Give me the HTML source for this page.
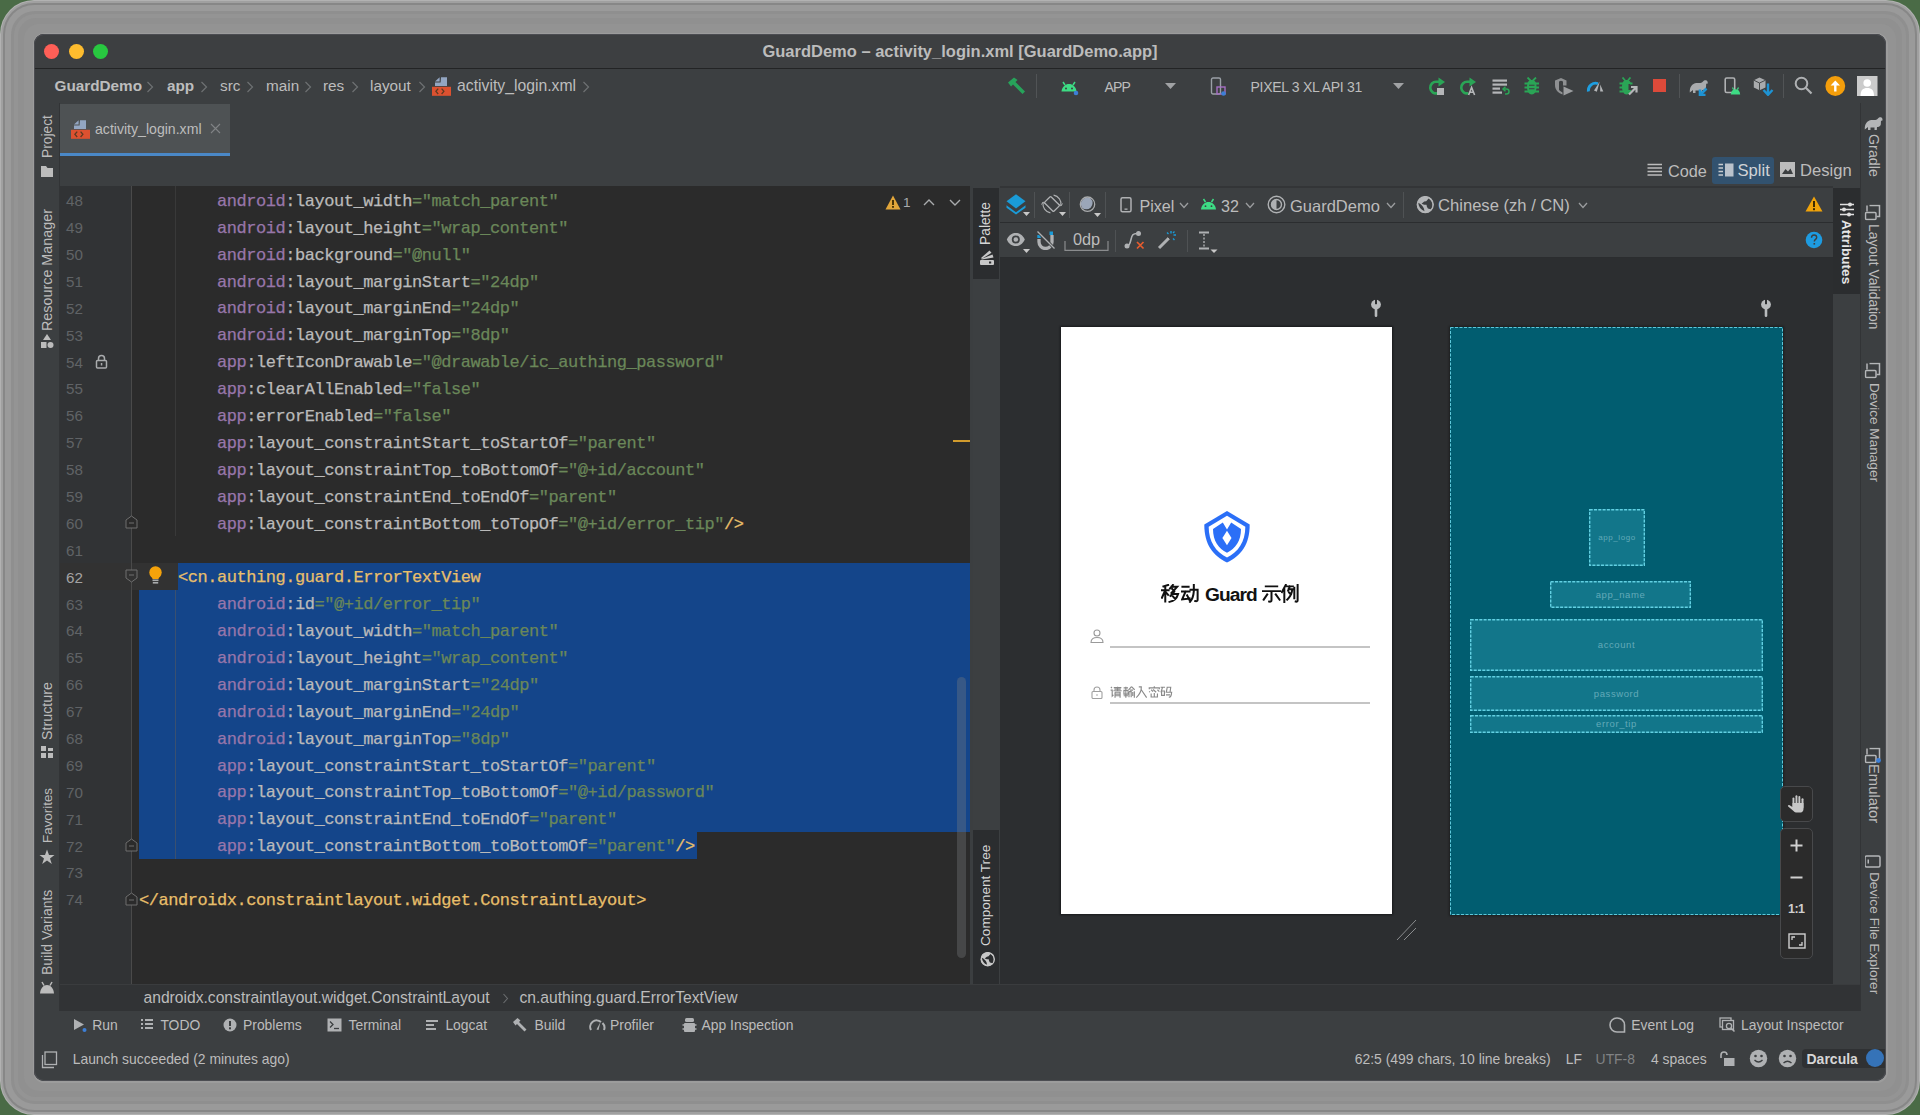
<!DOCTYPE html><html><head><meta charset="utf-8"><style>html,body{margin:0;padding:0}body{width:1920px;height:1115px;position:relative;overflow:hidden;background:#4a6b46}#root div,#root svg{box-sizing:border-box}</style></head><body><div id="root">
<div style="position:absolute;left:0px;top:0px;right:0px;bottom:0px;border-radius:34px;background:#b2b2b2"></div>
<div style="position:absolute;left:1px;top:1px;right:1px;bottom:1px;border-radius:33px;background:#a0a0a0"></div>
<div style="position:absolute;left:3px;top:3px;right:3px;bottom:3px;border-radius:31px;background:#878787"></div>
<div style="position:absolute;left:5px;top:5px;right:5px;bottom:5px;border-radius:29px;background:#9a9a9a"></div>
<div style="position:absolute;left:11px;top:11px;right:11px;bottom:11px;border-radius:24px;background:#8f8f8f"></div>
<div style="position:absolute;left:14px;top:14px;right:14px;bottom:14px;border-radius:21px;background:#949494"></div>
<div style="position:absolute;left:18px;top:18px;right:18px;bottom:18px;border-radius:18px;background:#909090"></div>
<div style="position:absolute;left:24px;top:24px;right:24px;bottom:24px;border-radius:15px;background:#939393"></div>
<div style="position:absolute;left:32.5px;top:32.5px;right:32.5px;bottom:32.5px;border-radius:11.5px;background:#9c9c9c"></div>
<div id="win" style="position:absolute;left:0;top:0;width:1920px;height:1115px;clip-path:inset(34px 34px 34px 34px round 10px);background:#3c3f41">
<div style="position:absolute;left:34px;top:34px;width:1852px;height:34px;background:#3d3f41;"></div>
<div style="position:absolute;left:34px;top:68px;width:1852px;height:1px;background:#232425;"></div>
<div style="position:absolute;left:44.0px;top:44px;width:15px;height:15px;border-radius:50%;background:#ff5f57"></div>
<div style="position:absolute;left:68.5px;top:44px;width:15px;height:15px;border-radius:50%;background:#febc2e"></div>
<div style="position:absolute;left:93.0px;top:44px;width:15px;height:15px;border-radius:50%;background:#28c840"></div>
<div style="position:absolute;left:560px;top:41px;width:800px;text-align:center;font:bold 16.5px/20px 'Liberation Sans', sans-serif;color:#bcbcbc;white-space:pre">GuardDemo – activity_login.xml [GuardDemo.app]</div>
<div style="position:absolute;left:34px;top:69px;width:1852px;height:34px;background:#3c3f41;"></div>
<div style="position:absolute;left:54.5px;top:76px;font:bold 15.3px/18px 'Liberation Sans', sans-serif;color:#bdbdbd;white-space:pre;line-height:20px">GuardDemo</div>
<div style="position:absolute;left:167px;top:76px;font:bold 15.3px/18px 'Liberation Sans', sans-serif;color:#bdbdbd;white-space:pre;line-height:20px">app</div>
<div style="position:absolute;left:220px;top:76px;font:normal 15.3px/18px 'Liberation Sans', sans-serif;color:#bdbdbd;white-space:pre;line-height:20px">src</div>
<div style="position:absolute;left:266px;top:76px;font:normal 15.3px/18px 'Liberation Sans', sans-serif;color:#bdbdbd;white-space:pre;line-height:20px">main</div>
<div style="position:absolute;left:323px;top:76px;font:normal 15.3px/18px 'Liberation Sans', sans-serif;color:#bdbdbd;white-space:pre;line-height:20px">res</div>
<div style="position:absolute;left:370px;top:76px;font:normal 15.3px/18px 'Liberation Sans', sans-serif;color:#bdbdbd;white-space:pre;line-height:20px">layout</div>
<svg style="position:absolute;left:146.3px;top:80.5px;" width="8" height="12" viewBox="0 0 8 12"><path d="M1.5 1 L6.5 6 L1.5 11" fill="none" stroke="#6e7173" stroke-width="1.2"/></svg>
<svg style="position:absolute;left:199.5px;top:80.5px;" width="8" height="12" viewBox="0 0 8 12"><path d="M1.5 1 L6.5 6 L1.5 11" fill="none" stroke="#6e7173" stroke-width="1.2"/></svg>
<svg style="position:absolute;left:246.3px;top:80.5px;" width="8" height="12" viewBox="0 0 8 12"><path d="M1.5 1 L6.5 6 L1.5 11" fill="none" stroke="#6e7173" stroke-width="1.2"/></svg>
<svg style="position:absolute;left:303.8px;top:80.5px;" width="8" height="12" viewBox="0 0 8 12"><path d="M1.5 1 L6.5 6 L1.5 11" fill="none" stroke="#6e7173" stroke-width="1.2"/></svg>
<svg style="position:absolute;left:350.7px;top:80.5px;" width="8" height="12" viewBox="0 0 8 12"><path d="M1.5 1 L6.5 6 L1.5 11" fill="none" stroke="#6e7173" stroke-width="1.2"/></svg>
<svg style="position:absolute;left:417.7px;top:80.5px;" width="8" height="12" viewBox="0 0 8 12"><path d="M1.5 1 L6.5 6 L1.5 11" fill="none" stroke="#6e7173" stroke-width="1.2"/></svg>
<svg style="position:absolute;left:581.7px;top:80.5px;" width="8" height="12" viewBox="0 0 8 12"><path d="M1.5 1 L6.5 6 L1.5 11" fill="none" stroke="#6e7173" stroke-width="1.2"/></svg>
<svg style="position:absolute;left:432px;top:77px;" width="20" height="20" viewBox="0 0 20 20"><path d="M9 0.2 H15 V9 H3 V5.6 H8.6 Z" fill="#93a6c2"/><path d="M3 4.6 L7.6 0.3 V4.6 Z" fill="#93a6c2"/><rect x="0" y="9.8" width="19" height="9" fill="#dc5130"/><path d="M6.2 11.6 L3.9 14.3 L6.2 17 M9.6 11.6 L11.9 14.3 L9.6 17" fill="none" stroke="#5e3a22" stroke-width="1.3"/></svg>
<div style="position:absolute;left:457px;top:76px;font:normal 15.75px/19px 'Liberation Sans', sans-serif;color:#bdbdbd;white-space:pre;line-height:20px">activity_login.xml</div>
<svg style="position:absolute;left:1006px;top:76px;" width="20" height="20" viewBox="0 0 20 20"><path d="M2 6.5 L8 1.5 L11.5 4 L9.5 6 L19 15.5 L16.5 18 L7 8.5 L5 10.5 Z" fill="#27a35a"/></svg>
<div style="position:absolute;left:1036px;top:74px;width:1px;height:24px;background:#515456;"></div>
<svg style="position:absolute;left:1060px;top:78px;" width="20" height="18" viewBox="0 0 20 18"><path d="M3 4 L5 7 M15 4 L13 7" stroke="#3ddc84" stroke-width="1.5"/><path d="M1.5 13.5 C2 8.5 5.5 6 9 6 C12.5 6 16 8.5 16.5 13.5 Z" fill="#3ddc84"/><circle cx="6" cy="10.5" r="1" fill="#3c3f41"/><circle cx="12" cy="10.5" r="1" fill="#3c3f41"/><circle cx="16" cy="15" r="2.3" fill="#3d7fd6"/></svg>
<div style="position:absolute;left:1104.5px;top:77px;font:normal 14px/17px 'Liberation Sans', sans-serif;color:#bdbdbd;white-space:pre;line-height:20px;letter-spacing:-0.9px">APP</div>
<svg style="position:absolute;left:1165px;top:83px;" width="11" height="6" viewBox="0 0 11 6"><path d="M0 0 H11 L5.5 6 Z" fill="#a0a2a4"/></svg>
<svg style="position:absolute;left:1210px;top:77px;" width="18" height="20" viewBox="0 0 18 20"><rect x="1.5" y="1" width="9" height="16" rx="1.5" fill="none" stroke="#9aa0a6" stroke-width="1.4"/><rect x="7" y="10" width="8" height="7" fill="none" stroke="#a66fc4" stroke-width="1.4"/><circle cx="13.5" cy="16.5" r="2.3" fill="#3d7fd6"/></svg>
<div style="position:absolute;left:1250.5px;top:77px;font:normal 14px/17px 'Liberation Sans', sans-serif;color:#bdbdbd;white-space:pre;line-height:20px;letter-spacing:-0.29px">PIXEL 3 XL API 31</div>
<svg style="position:absolute;left:1393px;top:83px;" width="11" height="6" viewBox="0 0 11 6"><path d="M0 0 H11 L5.5 6 Z" fill="#a0a2a4"/></svg>
<svg style="position:absolute;left:1428px;top:77px;" width="18" height="19" viewBox="0 0 18 19"><path d="M9.5 16.2 A5.8 5.8 0 1 1 8.5 4.8 H11" fill="none" stroke="#2aa556" stroke-width="2.6"/><path d="M10.5 0.4 L17 5 L10.5 9.6 Z" fill="#2aa556"/><rect x="9" y="11" width="7" height="7" fill="#b4b6b8"/></svg>
<svg style="position:absolute;left:1459px;top:77px;" width="18" height="19" viewBox="0 0 18 19"><path d="M9.5 16.2 A5.8 5.8 0 1 1 8.5 4.8 H11" fill="none" stroke="#2aa556" stroke-width="2.6"/><path d="M10.5 0.4 L17 5 L10.5 9.6 Z" fill="#2aa556"/><path d="M9.6 18 L12.6 10.5 L15.6 18 M10.8 15.2 H14.4" fill="none" stroke="#b4b6b8" stroke-width="1.6"/></svg>
<svg style="position:absolute;left:1492px;top:78px;" width="20" height="18" viewBox="0 0 20 18"><rect x="0.5" y="1.5" width="14.5" height="2.2" fill="#b4b6b8"/><rect x="0.5" y="5.5" width="14.5" height="2.2" fill="#b4b6b8"/><rect x="0.5" y="9.5" width="7.5" height="2.2" fill="#b4b6b8"/><rect x="0.5" y="13.5" width="9.5" height="2.2" fill="#b4b6b8"/><path d="M11.5 11 H14.5 A2.5 2.5 0 0 1 14.5 16 H13" fill="none" stroke="#2aa556" stroke-width="1.5"/><path d="M13.5 8.8 L11 11 L13.5 13.2" fill="none" stroke="#2aa556" stroke-width="1.5"/></svg>
<svg style="position:absolute;left:1524px;top:77px;" width="16" height="18" viewBox="0 0 16 18"><path d="M3.5 0.5 L7 4 M12 0.5 L8.5 4" stroke="#2aa556" stroke-width="1.8"/><path d="M7.75 3 C11 3 12.5 5.5 12.5 10 C12.5 14.5 10.5 17.5 7.75 17.5 C5 17.5 3 14.5 3 10 C3 5.5 4.5 3 7.75 3 Z" fill="#2aa556"/><path d="M0.5 6.5 H15 M0.5 10.5 H15 M0.5 14.5 H15" stroke="#2aa556" stroke-width="2"/><path d="M5 8.2 H10.5 M5 11.8 H10.5" stroke="#3c3f41" stroke-width="1.1"/></svg>
<svg style="position:absolute;left:1554px;top:77px;" width="20" height="19" viewBox="0 0 20 19"><path d="M1 3.5 L7 1 L12.5 3.5 V8.5 H9 V4.5 L7 3.8 L5 4.5 V13 C6 14 7 14.8 8.5 15.5 V17.5 C4 16 1 12.5 1 8 Z" fill="#8e9092"/><path d="M9.5 9.5 L19.5 14 L9.5 18.5 Z" fill="#9c9ea0"/></svg>
<svg style="position:absolute;left:1586px;top:78px;" width="19" height="15" viewBox="0 0 19 15"><path d="M2.3 13.5 A7.5 7.5 0 0 1 12 5.6" fill="none" stroke="#1e9ee0" stroke-width="2.8"/><path d="M14.2 6.5 L17.3 13.5 H14.2 Z" fill="#b4b6b8"/><path d="M13.8 3.5 L8 12.5 L10.8 13.8 Z" fill="#b4b6b8"/></svg>
<svg style="position:absolute;left:1619px;top:77px;" width="19" height="19" viewBox="0 0 19 19"><path d="M3.5 0.5 L6.5 4 M11.5 0.5 L8.5 4" stroke="#2aa556" stroke-width="1.8"/><path d="M7.5 3 C10.5 3 12 5 12 7 H9.5 V13 H12 V14 C11 16.5 9.5 17.5 7.5 17.5 C5 17.5 3 14.5 3 10 C3 5.5 4.5 3 7.5 3 Z" fill="#2aa556"/><path d="M0.5 6.5 H4 M0.5 10.5 H4 M0.5 14.5 H4 M11 6.5 H13.5" stroke="#2aa556" stroke-width="2"/><path d="M10 17.5 L17 10.5 M12 10 H17.5 V15.5" fill="none" stroke="#b4b6b8" stroke-width="2.2"/></svg>
<div style="position:absolute;left:1653px;top:79px;width:12.5px;height:13px;background:#dc4a3a"></div>
<div style="position:absolute;left:1679px;top:74px;width:1px;height:24px;background:#515456;"></div>
<svg style="position:absolute;left:1689px;top:78px;" width="21" height="18" viewBox="0 0 21 18"><path d="M0.8 14.5 C0.5 9 3 5.5 7.5 5 C10.5 4.7 12.5 5.5 14 3.5 C15 2 17.5 1.5 18.5 3.5 C19.3 5.3 18 6.8 17.2 5.3 L17 9.5 C16.5 11.5 14.5 12 13 12 L12.8 15 H10.5 V12.5 H6.5 V15 H4 V12 Z" fill="#a9abad"/><path d="M11 17 L17.5 10.5 M11 11.5 V17 H16.5" fill="none" stroke="#1e93d3" stroke-width="2.6"/></svg>
<svg style="position:absolute;left:1724px;top:77px;" width="17" height="19" viewBox="0 0 17 19"><rect x="1.2" y="1" width="9.5" height="14.5" rx="1.5" fill="none" stroke="#afb1b3" stroke-width="1.6"/><path d="M6.8 17.5 C7 14 9 12.3 11.5 12.3 C14 12.3 16 14 16.2 17.5 Z" fill="#3ddc84"/><path d="M8.5 10.5 L9.6 12.6 M14.5 10.5 L13.4 12.6" stroke="#3ddc84" stroke-width="1.2"/></svg>
<svg style="position:absolute;left:1753px;top:77px;" width="21" height="19" viewBox="0 0 21 19"><path d="M6.5 0.5 L12.5 3.2 V10.5 L6.5 13.2 L0.8 10.5 V3.2 Z" fill="#a9abad"/><path d="M0.8 3.2 L6.5 6 L12.5 3.2 M6.5 6 V13.2" fill="none" stroke="#3c3f41" stroke-width="0.9"/><path d="M15 6.5 V17.5 M10.5 13 L15 17.8 L19.5 13" fill="none" stroke="#1e93d3" stroke-width="2.4"/></svg>
<div style="position:absolute;left:1783px;top:74px;width:1px;height:24px;background:#515456;"></div>
<svg style="position:absolute;left:1794px;top:76px;" width="19" height="19" viewBox="0 0 19 19"><circle cx="7.5" cy="7.5" r="5.8" fill="none" stroke="#afb1b3" stroke-width="2"/><path d="M11.8 11.8 L17.5 17.5" stroke="#afb1b3" stroke-width="2.2"/></svg>
<svg style="position:absolute;left:1825px;top:76px;" width="21" height="21" viewBox="0 0 21 21"><circle cx="10.3" cy="10" r="9.9" fill="#f49e0b"/><path d="M10.3 4.5 L15 9.5 H11.5 V15.5 H9.1 V9.5 H5.6 Z" fill="#fff"/></svg>
<svg style="position:absolute;left:1857px;top:76px;" width="21" height="20" viewBox="0 0 21 20"><rect x="0" y="0" width="20.5" height="20" fill="#cbcbcb"/><circle cx="10.2" cy="7" r="3.8" fill="#fff"/><path d="M3.5 20 C3.5 14 6 12 10.2 12 C14.5 12 17 14 17 20 Z" fill="#fff"/></svg>
<div style="position:absolute;left:34px;top:103px;width:25px;height:908px;background:#3c3f41;"></div>
<div style="position:absolute;left:59px;top:103px;width:1px;height:908px;background:#323436;"></div>
<div style="position:absolute;left:34.5px;top:157.5px;width:0;height:0;"><div style="position:absolute;left:0;top:0;transform-origin:0 0;transform:rotate(-90deg);font:normal 13.8px/25px 'Liberation Sans', sans-serif;color:#bcbcbc;white-space:pre;height:25px">Project</div></div>
<div style="position:absolute;left:34.5px;top:331px;width:0;height:0;"><div style="position:absolute;left:0;top:0;transform-origin:0 0;transform:rotate(-90deg);font:normal 14.35px/25px 'Liberation Sans', sans-serif;color:#bcbcbc;white-space:pre;height:25px">Resource Manager</div></div>
<div style="position:absolute;left:34.5px;top:740px;width:0;height:0;"><div style="position:absolute;left:0;top:0;transform-origin:0 0;transform:rotate(-90deg);font:normal 14.25px/25px 'Liberation Sans', sans-serif;color:#bcbcbc;white-space:pre;height:25px">Structure</div></div>
<div style="position:absolute;left:34.5px;top:842.5px;width:0;height:0;"><div style="position:absolute;left:0;top:0;transform-origin:0 0;transform:rotate(-90deg);font:normal 13.4px/25px 'Liberation Sans', sans-serif;color:#bcbcbc;white-space:pre;height:25px">Favorites</div></div>
<div style="position:absolute;left:34.5px;top:975px;width:0;height:0;"><div style="position:absolute;left:0;top:0;transform-origin:0 0;transform:rotate(-90deg);font:normal 14.0px/25px 'Liberation Sans', sans-serif;color:#bcbcbc;white-space:pre;height:25px">Build Variants</div></div>
<svg style="position:absolute;left:40px;top:164px;" width="14" height="14" viewBox="0 0 14 14"><path d="M1 2 H6 L7.5 4 H13 V13 H1 Z" fill="#bcbcbc"/></svg>
<svg style="position:absolute;left:40px;top:333px;" width="14" height="18" viewBox="0 0 14 18"><path d="M7 1 L11 7 H3 Z" fill="#bcbcbc"/><rect x="1" y="9" width="5.5" height="6" fill="#bcbcbc"/><circle cx="10.5" cy="12" r="3" fill="#bcbcbc"/></svg>
<svg style="position:absolute;left:40px;top:745px;" width="14" height="14" viewBox="0 0 14 14"><rect x="1" y="1" width="5" height="5" fill="#bcbcbc"/><rect x="1" y="8" width="5" height="5" fill="#bcbcbc"/><rect x="8" y="8" width="5" height="5" fill="#bcbcbc"/><rect x="8" y="3" width="5" height="3" fill="#bcbcbc"/></svg>
<svg style="position:absolute;left:39px;top:849px;" width="16" height="16" viewBox="0 0 16 16"><path d="M8 0.5 L10 6 H15.5 L11 9.5 L12.8 15 L8 11.6 L3.2 15 L5 9.5 L0.5 6 H6 Z" fill="#bcbcbc"/></svg>
<svg style="position:absolute;left:39px;top:981px;" width="16" height="13" viewBox="0 0 16 13"><path d="M3 1 L5 4.5 M13 1 L11 4.5" stroke="#bcbcbc" stroke-width="1.5"/><path d="M1 12.5 C1.5 7 4.5 4 8 4 C11.5 4 14.5 7 15 12.5 Z" fill="#bcbcbc"/></svg>
<div style="position:absolute;left:60px;top:103px;width:1800px;height:83px;background:#3c3f41;"></div>
<div style="position:absolute;left:60px;top:104px;width:170px;height:49px;background:#4e5254;"></div>
<div style="position:absolute;left:60px;top:153px;width:170px;height:3px;background:#4a88c7;"></div>
<svg style="position:absolute;left:71px;top:120px;" width="20" height="20" viewBox="0 0 20 20"><path d="M9 0.2 H15 V9 H3 V5.6 H8.6 Z" fill="#93a6c2"/><path d="M3 4.6 L7.6 0.3 V4.6 Z" fill="#93a6c2"/><rect x="0" y="9.8" width="19" height="9" fill="#dc5130"/><path d="M6.2 11.6 L3.9 14.3 L6.2 17 M9.6 11.6 L11.9 14.3 L9.6 17" fill="none" stroke="#5e3a22" stroke-width="1.3"/></svg>
<div style="position:absolute;left:95px;top:119px;font:normal 14.1px/17px 'Liberation Sans', sans-serif;color:#bdbdbd;white-space:pre;line-height:20px">activity_login.xml</div>
<svg style="position:absolute;left:210px;top:123px;" width="11" height="11" viewBox="0 0 11 11"><path d="M1 1 L10 10 M10 1 L1 10" stroke="#808385" stroke-width="1.1"/></svg>
<svg style="position:absolute;left:1647px;top:163px;" width="16" height="14" viewBox="0 0 16 14"><path d="M0.5 1.5 H15 M0.5 5 H15 M0.5 8.5 H15 M0.5 12 H15" stroke="#bcbcbc" stroke-width="1.6"/></svg>
<div style="position:absolute;left:1668px;top:161px;font:normal 16.3px/20px 'Liberation Sans', sans-serif;color:#bcbcbc;white-space:pre;line-height:20px">Code</div>
<div style="position:absolute;left:1712px;top:157px;width:62px;height:27px;border-radius:3px;background:#32526f"></div>
<svg style="position:absolute;left:1718px;top:163px;" width="16" height="14" viewBox="0 0 16 14"><path d="M0.5 1.5 H5 M0.5 5 H5 M0.5 8.5 H5 M0.5 12 H5" stroke="#c8ccd0" stroke-width="1.4"/><rect x="7" y="0.5" width="8.5" height="13" fill="#b9c2cc"/></svg>
<div style="position:absolute;left:1737.5px;top:161px;font:normal 16.6px/20px 'Liberation Sans', sans-serif;color:#d0d3d6;white-space:pre;line-height:20px">Split</div>
<svg style="position:absolute;left:1780px;top:162px;" width="15" height="15" viewBox="0 0 15 15"><rect x="0" y="0" width="15" height="15" fill="#bcbcbc"/><path d="M2 12 L5.5 7 L8 9.5 L10.5 6.5 L13 12 Z" fill="#3c3f41"/></svg>
<div style="position:absolute;left:1800px;top:161px;font:normal 16.6px/20px 'Liberation Sans', sans-serif;color:#bcbcbc;white-space:pre;line-height:20px">Design</div>
<div style="position:absolute;left:60px;top:186px;width:910px;height:798px;background:#2b2b2b;"></div>
<div style="position:absolute;left:60px;top:186px;width:71px;height:798px;background:#313335;"></div>
<div style="position:absolute;left:60px;top:563.0px;width:118px;height:26.9px;background:#323232;"></div>
<div style="position:absolute;left:178px;top:563.0px;width:792px;height:26.9px;background:#14458a;"></div>
<div style="position:absolute;left:139px;top:589.9px;width:831px;height:242.1px;background:#14458a;"></div>
<div style="position:absolute;left:139px;top:832.0px;width:558px;height:26.9px;background:#14458a;"></div>
<div style="position:absolute;left:131px;top:186px;width:1px;height:798px;background:#4a4a4a;"></div>
<div style="position:absolute;left:175px;top:186px;width:1px;height:350.1px;background:#393939;"></div>
<div style="position:absolute;left:175px;top:589.9px;width:1px;height:269.0px;background:#3a5070;"></div>
<div style="position:absolute;left:139px;top:188.90000000000003px;font:normal 17px/26.9px 'Liberation Mono', monospace;letter-spacing:-0.4515px;-webkit-text-stroke:0.25px currentColor;white-space:pre;color:#a9b7c6"><div style="height:26.9px">        <span style="color:#9876aa">android</span><span style="color:#bababa">:layout_width</span><span style="color:#6a8759">=&quot;match_parent&quot;</span></div><div style="height:26.9px">        <span style="color:#9876aa">android</span><span style="color:#bababa">:layout_height</span><span style="color:#6a8759">=&quot;wrap_content&quot;</span></div><div style="height:26.9px">        <span style="color:#9876aa">android</span><span style="color:#bababa">:background</span><span style="color:#6a8759">=&quot;@null&quot;</span></div><div style="height:26.9px">        <span style="color:#9876aa">android</span><span style="color:#bababa">:layout_marginStart</span><span style="color:#6a8759">=&quot;24dp&quot;</span></div><div style="height:26.9px">        <span style="color:#9876aa">android</span><span style="color:#bababa">:layout_marginEnd</span><span style="color:#6a8759">=&quot;24dp&quot;</span></div><div style="height:26.9px">        <span style="color:#9876aa">android</span><span style="color:#bababa">:layout_marginTop</span><span style="color:#6a8759">=&quot;8dp&quot;</span></div><div style="height:26.9px">        <span style="color:#9876aa">app</span><span style="color:#bababa">:leftIconDrawable</span><span style="color:#6a8759">=&quot;@drawable/ic_authing_password&quot;</span></div><div style="height:26.9px">        <span style="color:#9876aa">app</span><span style="color:#bababa">:clearAllEnabled</span><span style="color:#6a8759">=&quot;false&quot;</span></div><div style="height:26.9px">        <span style="color:#9876aa">app</span><span style="color:#bababa">:errorEnabled</span><span style="color:#6a8759">=&quot;false&quot;</span></div><div style="height:26.9px">        <span style="color:#9876aa">app</span><span style="color:#bababa">:layout_constraintStart_toStartOf</span><span style="color:#6a8759">=&quot;parent&quot;</span></div><div style="height:26.9px">        <span style="color:#9876aa">app</span><span style="color:#bababa">:layout_constraintTop_toBottomOf</span><span style="color:#6a8759">=&quot;@+id/account&quot;</span></div><div style="height:26.9px">        <span style="color:#9876aa">app</span><span style="color:#bababa">:layout_constraintEnd_toEndOf</span><span style="color:#6a8759">=&quot;parent&quot;</span></div><div style="height:26.9px">        <span style="color:#9876aa">app</span><span style="color:#bababa">:layout_constraintBottom_toTopOf</span><span style="color:#6a8759">=&quot;@+id/error_tip&quot;</span><span style="color:#e8bf6a">/&gt;</span></div><div style="height:26.9px"><span style="color:#e8bf6a"></span></div><div style="height:26.9px"><span style="color:#e8bf6a">    &lt;cn.authing.guard.ErrorTextView</span></div><div style="height:26.9px">        <span style="color:#9876aa">android</span><span style="color:#bababa">:id</span><span style="color:#6a8759">=&quot;@+id/error_tip&quot;</span></div><div style="height:26.9px">        <span style="color:#9876aa">android</span><span style="color:#bababa">:layout_width</span><span style="color:#6a8759">=&quot;match_parent&quot;</span></div><div style="height:26.9px">        <span style="color:#9876aa">android</span><span style="color:#bababa">:layout_height</span><span style="color:#6a8759">=&quot;wrap_content&quot;</span></div><div style="height:26.9px">        <span style="color:#9876aa">android</span><span style="color:#bababa">:layout_marginStart</span><span style="color:#6a8759">=&quot;24dp&quot;</span></div><div style="height:26.9px">        <span style="color:#9876aa">android</span><span style="color:#bababa">:layout_marginEnd</span><span style="color:#6a8759">=&quot;24dp&quot;</span></div><div style="height:26.9px">        <span style="color:#9876aa">android</span><span style="color:#bababa">:layout_marginTop</span><span style="color:#6a8759">=&quot;8dp&quot;</span></div><div style="height:26.9px">        <span style="color:#9876aa">app</span><span style="color:#bababa">:layout_constraintStart_toStartOf</span><span style="color:#6a8759">=&quot;parent&quot;</span></div><div style="height:26.9px">        <span style="color:#9876aa">app</span><span style="color:#bababa">:layout_constraintTop_toBottomOf</span><span style="color:#6a8759">=&quot;@+id/password&quot;</span></div><div style="height:26.9px">        <span style="color:#9876aa">app</span><span style="color:#bababa">:layout_constraintEnd_toEndOf</span><span style="color:#6a8759">=&quot;parent&quot;</span></div><div style="height:26.9px">        <span style="color:#9876aa">app</span><span style="color:#bababa">:layout_constraintBottom_toBottomOf</span><span style="color:#6a8759">=&quot;parent&quot;</span><span style="color:#e8bf6a">/&gt;</span></div><div style="height:26.9px"><span style="color:#e8bf6a"></span></div><div style="height:26.9px"><span style="color:#e8bf6a">&lt;/androidx.constraintlayout.widget.ConstraintLayout&gt;</span></div></div>
<div style="position:absolute;left:60px;top:188.20000000000005px;width:23px;text-align:right;font:normal 15.2px/26.9px 'Liberation Sans', sans-serif;white-space:pre;color:#606366"><div style="height:26.9px;color:#606366">48</div><div style="height:26.9px;color:#606366">49</div><div style="height:26.9px;color:#606366">50</div><div style="height:26.9px;color:#606366">51</div><div style="height:26.9px;color:#606366">52</div><div style="height:26.9px;color:#606366">53</div><div style="height:26.9px;color:#606366">54</div><div style="height:26.9px;color:#606366">55</div><div style="height:26.9px;color:#606366">56</div><div style="height:26.9px;color:#606366">57</div><div style="height:26.9px;color:#606366">58</div><div style="height:26.9px;color:#606366">59</div><div style="height:26.9px;color:#606366">60</div><div style="height:26.9px;color:#606366">61</div><div style="height:26.9px;color:#a4a3a3">62</div><div style="height:26.9px;color:#606366">63</div><div style="height:26.9px;color:#606366">64</div><div style="height:26.9px;color:#606366">65</div><div style="height:26.9px;color:#606366">66</div><div style="height:26.9px;color:#606366">67</div><div style="height:26.9px;color:#606366">68</div><div style="height:26.9px;color:#606366">69</div><div style="height:26.9px;color:#606366">70</div><div style="height:26.9px;color:#606366">71</div><div style="height:26.9px;color:#606366">72</div><div style="height:26.9px;color:#606366">73</div><div style="height:26.9px;color:#606366">74</div></div>
<svg style="position:absolute;left:95px;top:353.8px;" width="13" height="15" viewBox="0 0 13 15"><path d="M3.5 6.5 V4.5 A3 3 0 0 1 9.5 4.5 V6.5" fill="none" stroke="#a9abad" stroke-width="1.5"/><rect x="1.5" y="6.5" width="10" height="7.5" rx="1" fill="none" stroke="#a9abad" stroke-width="1.5"/><rect x="5.8" y="9" width="1.5" height="2.5" fill="#a9abad"/></svg>
<svg style="position:absolute;left:125px;top:515.2px;" width="13" height="14" viewBox="0 0 13 14"><path d="M1 13 H12 V5 L6.5 1 L1 5 Z" fill="#2b2b2b" stroke="#6e6e6e" stroke-width="1"/><path d="M4 8 H9" stroke="#6e6e6e" stroke-width="1"/></svg>
<svg style="position:absolute;left:125px;top:569.0px;" width="13" height="14" viewBox="0 0 13 14"><path d="M1 1 H12 V9 L6.5 13 L1 9 Z" fill="#323232" stroke="#6e6e6e" stroke-width="1"/><path d="M4 6 H9" stroke="#6e6e6e" stroke-width="1"/></svg>
<svg style="position:absolute;left:125px;top:838.0px;" width="13" height="14" viewBox="0 0 13 14"><path d="M1 13 H12 V5 L6.5 1 L1 5 Z" fill="#2b2b2b" stroke="#6e6e6e" stroke-width="1"/><path d="M4 8 H9" stroke="#6e6e6e" stroke-width="1"/></svg>
<svg style="position:absolute;left:125px;top:891.8px;" width="13" height="14" viewBox="0 0 13 14"><path d="M1 13 H12 V5 L6.5 1 L1 5 Z" fill="#2b2b2b" stroke="#6e6e6e" stroke-width="1"/><path d="M4 8 H9" stroke="#6e6e6e" stroke-width="1"/></svg>
<svg style="position:absolute;left:148px;top:566.0px;" width="15" height="20" viewBox="0 0 15 20"><circle cx="7.5" cy="6.5" r="6.2" fill="#f4a20b"/><path d="M3.5 10 H11.5 L10.5 13 H4.5 Z" fill="#f4a20b"/><rect x="4.5" y="13.5" width="6" height="1.6" fill="#a9abad"/><rect x="4.8" y="16" width="5.4" height="1.6" fill="#a9abad"/></svg>
<svg style="position:absolute;left:885px;top:195px;" width="16" height="15" viewBox="0 0 16 15"><path d="M8 0.5 L15.5 14.5 H0.5 Z" fill="#e2a63a"/><rect x="7.1" y="5" width="1.8" height="5" fill="#3c2a00"/><rect x="7.1" y="11" width="1.8" height="1.8" fill="#3c2a00"/></svg>
<div style="position:absolute;left:903px;top:193px;font:normal 13.5px/16px 'Liberation Sans', sans-serif;color:#a9abad;white-space:pre;line-height:20px">1</div>
<svg style="position:absolute;left:923px;top:198px;" width="12" height="8" viewBox="0 0 12 8"><path d="M1 7 L6 2 L11 7" fill="none" stroke="#a9abad" stroke-width="1.4"/></svg>
<svg style="position:absolute;left:949px;top:199px;" width="12" height="8" viewBox="0 0 12 8"><path d="M1 1 L6 6 L11 1" fill="none" stroke="#a9abad" stroke-width="1.4"/></svg>
<div style="position:absolute;left:953px;top:440px;width:17px;height:2px;background:#d19b2d;"></div>
<div style="position:absolute;left:957px;top:677px;width:9px;height:281px;border-radius:5px;background:rgba(120,123,126,0.35)"></div>
<div style="position:absolute;left:970px;top:186px;width:3px;height:798px;background:#3b3e40;"></div>
<div style="position:absolute;left:973px;top:186px;width:27px;height:798px;background:#3c3f41;"></div>
<div style="position:absolute;left:973px;top:188px;width:26px;height:91px;background:#2b2d2f;"></div>
<div style="position:absolute;left:973px;top:830px;width:26px;height:154px;background:#2b2d2f;"></div>
<div style="position:absolute;left:973px;top:244.5px;width:0;height:0;"><div style="position:absolute;left:0;top:0;transform-origin:0 0;transform:rotate(-90deg);font:normal 13.8px/26px 'Liberation Sans', sans-serif;color:#d6d6d6;white-space:pre;height:26px">Palette</div></div>
<svg style="position:absolute;left:979px;top:249px;" width="16" height="17" viewBox="0 0 16 17"><rect x="1" y="11" width="14" height="5" rx="1" fill="#c8c8c8"/><rect x="10" y="12.5" width="2.2" height="2" fill="#2b2d2f"/><path d="M2 10 L13.5 5.5 L14.5 8.5 L3 10.5 Z" fill="#c8c8c8"/><path d="M2 9 L10.5 1.5 L12.5 3.8 L3 9.8 Z" fill="#c8c8c8"/></svg>
<div style="position:absolute;left:973px;top:946px;width:0;height:0;"><div style="position:absolute;left:0;top:0;transform-origin:0 0;transform:rotate(-90deg);font:normal 13.6px/26px 'Liberation Sans', sans-serif;color:#d6d6d6;white-space:pre;height:26px">Component Tree</div></div>
<svg style="position:absolute;left:980px;top:952px;" width="15" height="15" viewBox="0 0 18 18"><circle cx="9.25" cy="8.6" r="8.2" fill="#c8c8c8"/><path d="M12.6 2.4 L10.2 5.2 L8.2 5.6 L5.6 7.7 L8.2 8.8 L10.5 8.8 L10.9 10.7 L11.9 12.5 L15.4 13.6 C17.3 10 17 5.4 12.6 2.4 Z M2.2 6.8 C2.6 10.8 4.8 13.8 8.5 15.3 L7.8 12.2 C6.6 9.8 4.8 8 2.2 6.8 Z" fill="#2b2d2f"/><circle cx="9.25" cy="8.6" r="8" fill="none" stroke="#c8c8c8" stroke-width="1.3"/></svg>
<div style="position:absolute;left:1000px;top:186px;width:833px;height:798px;background:#2c2e30;"></div>
<div style="position:absolute;left:1000px;top:188px;width:833px;height:34px;background:#3c3f41;"></div>
<div style="position:absolute;left:1000px;top:222px;width:833px;height:1px;background:#2b2d2f;"></div>
<div style="position:absolute;left:1000px;top:223px;width:833px;height:34px;background:#3c3f41;"></div>
<div style="position:absolute;left:1000px;top:257px;width:833px;height:1px;background:#2b2d2f;"></div>
<div style="position:absolute;left:1000px;top:186px;width:833px;height:2px;background:#333537;"></div>
<svg style="position:absolute;left:1006px;top:194px;" width="20" height="21" viewBox="0 0 20 21"><path d="M10 0.3 L19.5 7.3 L10 14.5 L0.5 7.3 Z" fill="#1a9bd7"/><path d="M0.5 11.2 L10 18.2 L19.5 11.2 V13.8 L10 20.6 L0.5 13.8 Z" fill="#1a9bd7"/></svg>
<svg style="position:absolute;left:1023px;top:212px;" width="7" height="4" viewBox="0 0 7 4"><path d="M0 0 H7 L3.5 4 Z" fill="#c8c8c8"/></svg>
<div style="position:absolute;left:1034px;top:192px;width:1px;height:26px;background:#4f5254;"></div>
<svg style="position:absolute;left:1041px;top:194px;" width="22" height="21" viewBox="0 0 22 21"><rect x="6.5" y="3.5" width="9" height="13" rx="1" transform="rotate(-45 11 10)" fill="none" stroke="#afb1b3" stroke-width="1.3"/><path d="M12.6 1.1 A9 9 0 0 1 19.9 11.6 M9.4 18.9 A9 9 0 0 1 2.1 8.4" fill="none" stroke="#afb1b3" stroke-width="1.1"/><path d="M17.5 10 L19.9 12 L21.5 9.5 M4.5 10 L2.1 8 L0.5 10.5" fill="none" stroke="#afb1b3" stroke-width="1"/></svg>
<svg style="position:absolute;left:1059px;top:212px;" width="7" height="4" viewBox="0 0 7 4"><path d="M0 0 H7 L3.5 4 Z" fill="#c8c8c8"/></svg>
<div style="position:absolute;left:1069px;top:192px;width:1px;height:26px;background:#4f5254;"></div>
<svg style="position:absolute;left:1079px;top:196px;" width="17" height="17" viewBox="0 0 17 17"><clipPath id="nmc"><circle cx="8.5" cy="8.2" r="6.6"/></clipPath><g clip-path="url(#nmc)"><circle cx="7.3" cy="7" r="6.3" fill="#9ba6b8"/></g><circle cx="8.5" cy="8.2" r="7.2" fill="none" stroke="#a9abad" stroke-width="1.3"/></svg>
<svg style="position:absolute;left:1094px;top:213px;" width="7" height="4" viewBox="0 0 7 4"><path d="M0 0 H7 L3.5 4 Z" fill="#c8c8c8"/></svg>
<div style="position:absolute;left:1105px;top:192px;width:1px;height:26px;background:#4f5254;"></div>
<svg style="position:absolute;left:1120px;top:197px;" width="13" height="16" viewBox="0 0 13 16"><rect x="1" y="0.8" width="10" height="14" rx="1.5" fill="none" stroke="#afb1b3" stroke-width="1.5"/><rect x="4.5" y="11.5" width="3" height="1.3" fill="#afb1b3"/></svg>
<div style="position:absolute;left:1139.5px;top:196px;font:normal 16.1px/19px 'Liberation Sans', sans-serif;color:#bcbcbc;white-space:pre;line-height:20px">Pixel</div>
<svg style="position:absolute;left:1179px;top:202px;" width="10" height="7" viewBox="0 0 10 7"><path d="M1 1 L5 5.5 L9 1" fill="none" stroke="#9a9c9e" stroke-width="1.3"/></svg>
<svg style="position:absolute;left:1200px;top:198px;" width="17" height="13" viewBox="0 0 17 13"><path d="M3.5 1 L5.5 4 M13.5 1 L11.5 4" stroke="#3ddc84" stroke-width="1.5"/><path d="M1 11.5 C1.5 6.5 5 4 8.5 4 C12 4 15.5 6.5 16 11.5 Z" fill="#3ddc84"/><circle cx="5.5" cy="8.2" r="0.9" fill="#3c3f41"/><circle cx="11.5" cy="8.2" r="0.9" fill="#3c3f41"/></svg>
<div style="position:absolute;left:1221px;top:196px;font:normal 16.1px/19px 'Liberation Sans', sans-serif;color:#bcbcbc;white-space:pre;line-height:20px">32</div>
<svg style="position:absolute;left:1245px;top:202px;" width="10" height="7" viewBox="0 0 10 7"><path d="M1 1 L5 5.5 L9 1" fill="none" stroke="#9a9c9e" stroke-width="1.3"/></svg>
<svg style="position:absolute;left:1267px;top:195px;" width="19" height="19" viewBox="0 0 19 19"><circle cx="9.5" cy="9.5" r="8.3" fill="none" stroke="#afb1b3" stroke-width="1.4"/><circle cx="9.5" cy="9.5" r="5" fill="none" stroke="#afb1b3" stroke-width="1.4"/><path d="M9.5 4.5 A5 5 0 0 0 9.5 14.5 Z" fill="#afb1b3"/></svg>
<div style="position:absolute;left:1290px;top:196px;font:normal 16.5px/20px 'Liberation Sans', sans-serif;color:#bcbcbc;white-space:pre;line-height:20px">GuardDemo</div>
<svg style="position:absolute;left:1386px;top:202px;" width="10" height="7" viewBox="0 0 10 7"><path d="M1 1 L5 5.5 L9 1" fill="none" stroke="#9a9c9e" stroke-width="1.3"/></svg>
<div style="position:absolute;left:1403px;top:192px;width:1px;height:26px;background:#4f5254;"></div>
<svg style="position:absolute;left:1416px;top:196px;" width="18" height="18" viewBox="0 0 18 18"><circle cx="9.25" cy="8.6" r="8.2" fill="#b4b6b8"/><path d="M12.6 2.4 L10.2 5.2 L8.2 5.6 L5.6 7.7 L8.2 8.8 L10.5 8.8 L10.9 10.7 L11.9 12.5 L15.4 13.6 C17.3 10 17 5.4 12.6 2.4 Z M2.2 6.8 C2.6 10.8 4.8 13.8 8.5 15.3 L7.8 12.2 C6.6 9.8 4.8 8 2.2 6.8 Z" fill="#3c3f41"/><circle cx="9.25" cy="8.6" r="8" fill="none" stroke="#b4b6b8" stroke-width="1.3"/></svg>
<div style="position:absolute;left:1438px;top:196px;font:normal 16.6px/20px 'Liberation Sans', sans-serif;color:#bcbcbc;white-space:pre;line-height:20px">Chinese (zh / CN)</div>
<svg style="position:absolute;left:1578px;top:202px;" width="10" height="7" viewBox="0 0 10 7"><path d="M1 1 L5 5.5 L9 1" fill="none" stroke="#9a9c9e" stroke-width="1.3"/></svg>
<svg style="position:absolute;left:1805px;top:196px;" width="18" height="16" viewBox="0 0 18 16"><path d="M9 0.5 L17.5 15.5 H0.5 Z" fill="#f0a30a"/><rect x="8" y="5" width="2" height="6" fill="#3c2a00"/><rect x="8" y="12.2" width="2" height="2" fill="#3c2a00"/></svg>
<svg style="position:absolute;left:1006px;top:232px;" width="20" height="15" viewBox="0 0 20 15"><path d="M0.8 7.5 C3 2.5 6.5 1 9.8 1 C13 1 16.5 2.5 18.8 7.5 C16.5 12.5 13 14 9.8 14 C6.5 14 3 12.5 0.8 7.5 Z" fill="#afb1b3"/><circle cx="9.8" cy="7.5" r="4" fill="#3c3f41"/><circle cx="9.8" cy="7.5" r="2.3" fill="#afb1b3"/></svg>
<svg style="position:absolute;left:1023px;top:249px;" width="7" height="4" viewBox="0 0 7 4"><path d="M0 0 H7 L3.5 4 Z" fill="#c8c8c8"/></svg>
<svg style="position:absolute;left:1036px;top:230px;" width="20" height="20" viewBox="0 0 20 20"><path d="M3 9 V12 A6.5 6.5 0 0 0 16 12 V5" fill="none" stroke="#afb1b3" stroke-width="3.3"/><rect x="13.5" y="1.5" width="3.5" height="3.5" fill="#1a9bd7"/><rect x="1.3" y="5" width="3.5" height="3" fill="#1a9bd7"/><path d="M1 1 L18.5 18.5" stroke="#3c3f41" stroke-width="3"/><path d="M1.5 1.5 L18.5 18.5" stroke="#afb1b3" stroke-width="1.3"/></svg>
<div style="position:absolute;left:1073px;top:229px;font:normal 16.3px/20px 'Liberation Sans', sans-serif;color:#bcbcbc;white-space:pre;line-height:20px">0dp</div>
<svg style="position:absolute;left:1064px;top:241px;" width="45" height="10" viewBox="0 0 45 10"><path d="M1 0 V9.3 H44 V0" fill="none" stroke="#8a8c8e" stroke-width="1.2"/></svg>
<div style="position:absolute;left:1115px;top:230px;width:1px;height:22px;background:#4f5254;"></div>
<svg style="position:absolute;left:1124px;top:230px;" width="22" height="20" viewBox="0 0 22 20"><path d="M3 16 C5 16 6 14 7 9.5 C8 5 9 3.5 13 3.5" fill="none" stroke="#afb1b3" stroke-width="1.6"/><circle cx="3" cy="16" r="2.5" fill="#afb1b3"/><circle cx="14.5" cy="3.5" r="2.5" fill="#afb1b3"/><path d="M13 12 L19.5 18.5 M19.5 12 L13 18.5" stroke="#e65c2e" stroke-width="1.7"/></svg>
<svg style="position:absolute;left:1157px;top:230px;" width="21" height="20" viewBox="0 0 21 20"><path d="M2 18 L12 8" stroke="#afb1b3" stroke-width="3"/><path d="M10.5 6.5 L13.5 9.5" stroke="#3c3f41" stroke-width="0.9"/><path d="M14 1 V3.5 M19 5 H16.5 M17.5 1.5 L16 3 M17.5 10 L16 8.5 M10 2.5 L11.5 4" stroke="#1a9bd7" stroke-width="1.4"/></svg>
<div style="position:absolute;left:1187px;top:230px;width:1px;height:22px;background:#4f5254;"></div>
<svg style="position:absolute;left:1198px;top:231px;" width="21" height="23" viewBox="0 0 21 23"><path d="M1 1.5 H11 M1 17.5 H11" stroke="#afb1b3" stroke-width="2"/><path d="M6 3 V16" stroke="#afb1b3" stroke-width="1.4" stroke-dasharray="2 1.5"/><path d="M12.5 18.5 H19.5 L16 22 Z" fill="#c8c8c8"/></svg>
<svg style="position:absolute;left:1805px;top:231px;" width="18" height="18" viewBox="0 0 18 18"><circle cx="9" cy="9" r="8.3" fill="#1e9be0"/><path d="M6.5 6.8 C6.5 5 7.6 4 9.1 4 C10.7 4 11.7 5 11.7 6.5 C11.7 8.3 9.3 8.5 9.3 10.5" fill="none" stroke="#3c3f41" stroke-width="1.4"/><rect x="8.5" y="12" width="1.6" height="1.6" fill="#3c3f41"/></svg>
<svg style="position:absolute;left:1370px;top:299px;" width="12" height="19" viewBox="0 0 12 19"><circle cx="6" cy="5.6" r="4.9" fill="#b9bbbd"/><rect x="5" y="-1" width="2" height="6.2" fill="#2c2e30"/><rect x="4.7" y="8" width="2.6" height="10" rx="1.3" fill="#b9bbbd"/></svg>
<svg style="position:absolute;left:1760px;top:299px;" width="12" height="19" viewBox="0 0 12 19"><circle cx="6" cy="5.6" r="4.9" fill="#b9bbbd"/><rect x="5" y="-1" width="2" height="6.2" fill="#2c2e30"/><rect x="4.7" y="8" width="2.6" height="10" rx="1.3" fill="#b9bbbd"/></svg>
<div style="position:absolute;left:1061px;top:327px;width:331px;height:587px;background:#ffffff;box-shadow:0 0 2px 1px rgba(0,0,0,0.45)"></div>
<svg style="position:absolute;left:1203px;top:510px;" width="48" height="54" viewBox="0 0 48 54"><path d="M24 1 L46.7 14.5 C46.7 35 38 45.5 24 52.5 C10 45.5 1.3 35 1.3 14.5 Z" fill="#2b6ff7"/><path d="M24 5.8 L42.3 16.8 C42.3 32.5 35 41.8 24 47.6 C13 41.8 5.7 32.5 5.7 16.8 Z" fill="#ffffff"/><path d="M10 19 L19.8 12.6 L24 19.5 L28.2 12.6 L38 19 C38 31 32.5 38.5 24 42.7 C15.5 38.5 10 31 10 19 Z" fill="#2b6ff7"/><path d="M24 20.8 L28.5 28 L24 35.2 L19.4 28 Z" fill="#ffffff"/></svg>
<svg style="position:absolute;left:1161px;top:584px;" width="19" height="19" viewBox="0 0 20 20"><path d="M2.5 2.5 L7.5 1 M1 6.5 H8 M4.5 2 V18.5 M4.3 7 L1 14.5 M5 8.5 L7.5 11.5 M12.5 1 L9.5 4.5 M11 3 H17 L11 9.5 M11.8 5.2 L14 7.5 M13.5 8.5 L10 12.5 M12 10.5 H18 C16.5 16 13.5 18 9 18.8 M12.5 13 L14.8 15.5" fill="none" stroke="#111" stroke-width="2.1" stroke-linecap="square"/></svg>
<svg style="position:absolute;left:1181px;top:584px;" width="19" height="19" viewBox="0 0 20 20"><path d="M1.5 3 H8 M0.5 8 H9 M4.8 8 L1.2 16.2 L9 15.2 M6.5 12 L8.8 16.5 M10 6 H17.5 V16.5 Q17.5 18.5 15 18 M13.5 1 V7.5 Q13 15 9.5 18.8" fill="none" stroke="#111" stroke-width="2.1" stroke-linecap="square"/></svg>
<div style="position:absolute;left:1205px;top:583px;font:bold 19.2px/23px 'Liberation Sans', sans-serif;color:#121212;white-space:pre;line-height:24px;letter-spacing:-0.95px">Guard</div>
<svg style="position:absolute;left:1262px;top:584px;" width="19" height="19" viewBox="0 0 20 20"><path d="M4 2.5 H16 M1 7.5 H19 M10 7.5 V17 Q10 19 7.5 18.5 M5.5 11 L1.8 16.5 M14.5 11 L18.5 16.5" fill="none" stroke="#111" stroke-width="2.1" stroke-linecap="square"/></svg>
<svg style="position:absolute;left:1281px;top:584px;" width="19" height="19" viewBox="0 0 20 20"><path d="M5 1 L1 8.5 M3.5 5.5 V19 M6.5 2.5 H12.5 M9.3 2.5 L7.5 7 M8 5.5 H12 Q11 12.5 6.5 16.5 M8.5 9 L10.5 11 M14 4 V15 M17.5 1 V17 Q17.5 19 15.5 18.5" fill="none" stroke="#111" stroke-width="2.1" stroke-linecap="square"/></svg>
<svg style="position:absolute;left:1090px;top:629px;" width="14" height="15" viewBox="0 0 14 15"><circle cx="7" cy="4" r="3" fill="none" stroke="#9a9a9a" stroke-width="1.1"/><path d="M1 13.5 C1 10 3.5 8.5 7 8.5 C10.5 8.5 13 10 13 13.5 Z" fill="none" stroke="#9a9a9a" stroke-width="1.1"/></svg>
<div style="position:absolute;left:1110px;top:646px;width:260px;height:1.6px;background:#c4c4c4;"></div>
<svg style="position:absolute;left:1091px;top:686px;" width="12" height="13" viewBox="0 0 12 13"><path d="M3 5.5 V4 A3 3 0 0 1 9 4 V5.5" fill="none" stroke="#a0a0a0" stroke-width="1.1"/><rect x="1" y="5.5" width="10" height="7" rx="1" fill="none" stroke="#a0a0a0" stroke-width="1.1"/><circle cx="6" cy="9" r="0.8" fill="#a0a0a0"/></svg>
<svg style="position:absolute;left:1110.0px;top:686px;" width="12.6" height="12.6" viewBox="0 0 20 20"><path d="M1.5 1.5 L3 3.5 M1 6.5 H3.5 V16 L5.5 14 M6 2.5 H18 M7 5 H17 M5.5 7.5 H18.5 M12 1 V7.5 M8 10 H16 V18.5 M8 10 V18.5 M8 13 H16 M8 15.5 H16" fill="none" stroke="#8a8a8a" stroke-width="1.8253968253968254"/></svg>
<svg style="position:absolute;left:1122.6px;top:686px;" width="12.6" height="12.6" viewBox="0 0 20 20"><path d="M1 3 H8 M4.5 1 V18.5 M1.5 7 H8 V13 H1.5 Z M1 15.5 H8 M13.5 1 L9 6 M13.5 1 L18.5 6 M11 6.5 H16 M9.5 9 V18 M9.5 9 H13 V18 M15.5 9.5 V16 M18 8.5 V18.5" fill="none" stroke="#8a8a8a" stroke-width="1.8253968253968254"/></svg>
<svg style="position:absolute;left:1135.2px;top:686px;" width="12.6" height="12.6" viewBox="0 0 20 20"><path d="M6 1.5 H10 Q10.5 10 2 18.5 M10 6 L18.5 18.5" fill="none" stroke="#8a8a8a" stroke-width="1.8253968253968254"/></svg>
<svg style="position:absolute;left:1147.8px;top:686px;" width="12.6" height="12.6" viewBox="0 0 20 20"><path d="M10 0.5 V2.5 M2 5 V3 H18 V5 M5 6 L8 9 M8 5.5 L13 10 M15 6 L18 9 M3 8.5 L2 10 M5 12 V17.5 H15 V12 M10 11 V17.5" fill="none" stroke="#8a8a8a" stroke-width="1.8253968253968254"/></svg>
<svg style="position:absolute;left:1160.4px;top:686px;" width="12.6" height="12.6" viewBox="0 0 20 20"><path d="M1 2 H8 M4 2 L1.5 10 M2.5 8 H7 V15 H2.5 Z M10.5 2 H17 L16 10 M11.5 2 L10 10 H18.5 Q18 18.5 14 17.5 M9.5 14 H16" fill="none" stroke="#8a8a8a" stroke-width="1.8253968253968254"/></svg>
<div style="position:absolute;left:1110px;top:702px;width:260px;height:1.6px;background:#c4c4c4;"></div>
<div style="position:absolute;left:1450px;top:327px;width:333px;height:588px;background:#015d70;box-shadow:0 0 2px 1px rgba(0,0,0,0.35)"></div>
<svg style="position:absolute;left:1450px;top:327px;" width="333" height="588" viewBox="0 0 333 588"><rect x="0.5" y="0.5" width="332" height="587" fill="none" stroke="#5ec8da" stroke-width="1" stroke-dasharray="3 1.5"/></svg>
<div style="position:absolute;left:1589px;top:509px;width:56px;height:57px;background:#12768a;display:flex;align-items:center;justify-content:center;font:normal 8px/12px 'Liberation Sans', sans-serif;color:#62aab9;letter-spacing:0.6px">app_logo</div><svg style="position:absolute;left:1589px;top:509px;" width="56" height="57" viewBox="0 0 56 57"><rect x="0.7" y="0.7" width="54.6" height="55.6" fill="none" stroke="#62d0e2" stroke-width="1.4" stroke-dasharray="3 1.3"/></svg>
<div style="position:absolute;left:1550px;top:581px;width:141px;height:27px;background:#12768a;display:flex;align-items:center;justify-content:center;font:normal 9.5px/12px 'Liberation Sans', sans-serif;color:#62aab9;letter-spacing:0.6px">app_name</div><svg style="position:absolute;left:1550px;top:581px;" width="141" height="27" viewBox="0 0 141 27"><rect x="0.7" y="0.7" width="139.6" height="25.6" fill="none" stroke="#62d0e2" stroke-width="1.4" stroke-dasharray="3 1.3"/></svg>
<div style="position:absolute;left:1470px;top:619px;width:293px;height:52px;background:#12768a;display:flex;align-items:center;justify-content:center;font:normal 9.5px/12px 'Liberation Sans', sans-serif;color:#62aab9;letter-spacing:0.6px">account</div><svg style="position:absolute;left:1470px;top:619px;" width="293" height="52" viewBox="0 0 293 52"><rect x="0.7" y="0.7" width="291.6" height="50.6" fill="none" stroke="#62d0e2" stroke-width="1.4" stroke-dasharray="3 1.3"/></svg>
<div style="position:absolute;left:1470px;top:676px;width:293px;height:35px;background:#12768a;display:flex;align-items:center;justify-content:center;font:normal 9.5px/12px 'Liberation Sans', sans-serif;color:#62aab9;letter-spacing:0.6px">password</div><svg style="position:absolute;left:1470px;top:676px;" width="293" height="35" viewBox="0 0 293 35"><rect x="0.7" y="0.7" width="291.6" height="33.6" fill="none" stroke="#62d0e2" stroke-width="1.4" stroke-dasharray="3 1.3"/></svg>
<div style="position:absolute;left:1470px;top:715px;width:293px;height:18px;background:#12768a;display:flex;align-items:center;justify-content:center;font:normal 9.5px/12px 'Liberation Sans', sans-serif;color:#62aab9;letter-spacing:0.6px">error_tip</div><svg style="position:absolute;left:1470px;top:715px;" width="293" height="18" viewBox="0 0 293 18"><rect x="0.7" y="0.7" width="291.6" height="16.6" fill="none" stroke="#62d0e2" stroke-width="1.4" stroke-dasharray="3 1.3"/></svg>
<svg style="position:absolute;left:1396px;top:918px;" width="22" height="24" viewBox="0 0 22 24"><path d="M1 22 L20 2 M8 22 L20 10" stroke="#8a8c8e" stroke-width="1"/></svg>
<div style="position:absolute;left:1779.5px;top:785.5px;width:33.5px;height:36.5px;border-radius:5px;background:#2b2b2b;border:1.5px solid #48494b"></div>
<svg style="position:absolute;left:1787px;top:794px;" width="18" height="20" viewBox="0 0 18 20"><rect x="5.5" y="3.5" width="1.9" height="10" rx="0.95" fill="#c8c8c8"/><rect x="8.5" y="1.2" width="1.9" height="12" rx="0.95" fill="#c8c8c8"/><rect x="11.4" y="2.1" width="1.9" height="11" rx="0.95" fill="#c8c8c8"/><rect x="14.5" y="4.2" width="2" height="10" rx="1" fill="#c8c8c8"/><path d="M5.5 9 H16.5 V15 C16.5 17.5 15 18.6 12.5 18.6 H10 C8.5 18.6 7.5 18 6.5 17 L1.2 12.6 C0.5 11.8 1.2 10.8 2.2 11 L5.5 13 Z" fill="#c8c8c8"/></svg>
<div style="position:absolute;left:1779.5px;top:827.5px;width:33.5px;height:131.5px;border-radius:5px;background:#2b2b2b;border:1.5px solid #48494b"></div>
<svg style="position:absolute;left:1789px;top:838px;" width="15" height="15" viewBox="0 0 15 15"><path d="M7.5 1.5 V13.5 M1.5 7.5 H13.5" stroke="#d0d0d0" stroke-width="2"/></svg>
<svg style="position:absolute;left:1789px;top:870px;" width="15" height="15" viewBox="0 0 15 15"><path d="M1.5 7.5 H13.5" stroke="#d0d0d0" stroke-width="2"/></svg>
<div style="position:absolute;left:1788px;top:900px;font:bold 12.5px/15px 'Liberation Sans', sans-serif;color:#d0d0d0;white-space:pre;line-height:18px;letter-spacing:-0.5px">1:1</div>
<svg style="position:absolute;left:1788px;top:933px;" width="18" height="17" viewBox="0 0 18 17"><rect x="1" y="1" width="16" height="14" fill="none" stroke="#d0d0d0" stroke-width="1.4"/><path d="M4 7 V4 H7 M14 9 V12 H11" fill="none" stroke="#d0d0d0" stroke-width="1.3"/></svg>
<div style="position:absolute;left:1833px;top:186px;width:27px;height:798px;background:#3c3f41;"></div>
<div style="position:absolute;left:1833px;top:188px;width:27px;height:106px;background:#2b2d2f;"></div>
<svg style="position:absolute;left:1839px;top:202px;" width="16" height="15" viewBox="0 0 16 15"><path d="M1 2.5 H15 M1 7.5 H15 M1 12.5 H15" stroke="#e0e0e0" stroke-width="1.4"/><circle cx="11" cy="2.5" r="2" fill="#e0e0e0"/><circle cx="5" cy="7.5" r="2" fill="#e0e0e0"/><circle cx="10" cy="12.5" r="2" fill="#e0e0e0"/></svg>
<div style="position:absolute;left:1860px;top:220px;width:0;height:0;"><div style="position:absolute;left:0;top:0;transform-origin:0 0;transform:rotate(90deg);font:bold 13.6px/27px 'Liberation Sans', sans-serif;color:#e6e6e6;white-space:pre;height:27px">Attributes</div></div>
<div style="position:absolute;left:1860px;top:103px;width:26px;height:908px;background:#3c3f41;"></div>
<div style="position:absolute;left:1860px;top:103px;width:1px;height:908px;background:#323436;"></div>
<svg style="position:absolute;left:1864px;top:116px;" width="19" height="15" viewBox="0 0 19 15"><path d="M0.8 13.5 C0.5 8 3 4.5 7.5 4 C10.5 3.7 12.5 4.5 14 2.5 C15 1 17.5 0.5 18.3 2.5 C19 4.3 17.8 5.8 17 4.3 L16.8 8.5 C16.3 10.5 14.5 11 13 11 L12.8 14 H10.5 V11.5 H6.5 V14 H4 V11 Z" fill="#b4b6b8"/></svg>
<div style="position:absolute;left:1887px;top:134px;width:0;height:0;"><div style="position:absolute;left:0;top:0;transform-origin:0 0;transform:rotate(90deg);font:normal 14.3px/26px 'Liberation Sans', sans-serif;color:#bcbcbc;white-space:pre;height:26px">Gradle</div></div>
<div style="position:absolute;left:1887px;top:224px;width:0;height:0;"><div style="position:absolute;left:0;top:0;transform-origin:0 0;transform:rotate(90deg);font:normal 13.9px/26px 'Liberation Sans', sans-serif;color:#bcbcbc;white-space:pre;height:26px">Layout Validation</div></div>
<div style="position:absolute;left:1887px;top:383px;width:0;height:0;"><div style="position:absolute;left:0;top:0;transform-origin:0 0;transform:rotate(90deg);font:normal 13.6px/26px 'Liberation Sans', sans-serif;color:#bcbcbc;white-space:pre;height:26px">Device Manager</div></div>
<div style="position:absolute;left:1887px;top:764px;width:0;height:0;"><div style="position:absolute;left:0;top:0;transform-origin:0 0;transform:rotate(90deg);font:normal 14.8px/26px 'Liberation Sans', sans-serif;color:#bcbcbc;white-space:pre;height:26px">Emulator</div></div>
<div style="position:absolute;left:1887px;top:872px;width:0;height:0;"><div style="position:absolute;left:0;top:0;transform-origin:0 0;transform:rotate(90deg);font:normal 13.67px/26px 'Liberation Sans', sans-serif;color:#bcbcbc;white-space:pre;height:26px">Device File Explorer</div></div>
<svg style="position:absolute;left:1865px;top:204px;transform:rotate(90deg)" width="16" height="17" viewBox="0 0 16 17"><path d="M1 12 V2 H12 V5" fill="none" stroke="#b4b6b8" stroke-width="1.5"/><rect x="8" y="5.5" width="7" height="10.5" rx="1" fill="none" stroke="#b4b6b8" stroke-width="1.5"/><path d="M1 14.5 H7" stroke="#b4b6b8" stroke-width="1.5"/></svg>
<svg style="position:absolute;left:1865px;top:362px;transform:rotate(90deg)" width="16" height="17" viewBox="0 0 16 17"><path d="M1 12 V2 H12 V5" fill="none" stroke="#b4b6b8" stroke-width="1.5"/><rect x="8" y="5.5" width="7" height="10.5" rx="1" fill="none" stroke="#b4b6b8" stroke-width="1.5"/><path d="M1 14.5 H7" stroke="#b4b6b8" stroke-width="1.5"/></svg>
<svg style="position:absolute;left:1865px;top:747px;transform:rotate(90deg)" width="16" height="17" viewBox="0 0 16 17"><path d="M1 12 V2 H12 V5" fill="none" stroke="#b4b6b8" stroke-width="1.5"/><rect x="8" y="5.5" width="7" height="10.5" rx="1" fill="none" stroke="#b4b6b8" stroke-width="1.5"/><path d="M1 14.5 H7" stroke="#b4b6b8" stroke-width="1.5"/><circle cx="13" cy="3" r="2.4" fill="#3d7fd6"/></svg>
<svg style="position:absolute;left:1865px;top:853px;transform:rotate(90deg)" width="16" height="16" viewBox="0 0 16 16"><rect x="3" y="1" width="11" height="15" rx="1.5" fill="none" stroke="#b4b6b8" stroke-width="1.5"/><rect x="6.5" y="12" width="4" height="1.5" fill="#b4b6b8"/></svg>
<div style="position:absolute;left:60px;top:984px;width:1800px;height:27px;background:#313335;"></div>
<div style="position:absolute;left:60px;top:984px;width:1800px;height:1px;background:#3a3c3e;"></div>
<div style="position:absolute;left:34px;top:1011px;width:1852px;height:1px;background:#323436;"></div>
<div style="position:absolute;left:143.5px;top:988px;font:normal 15.65px/19px 'Liberation Sans', sans-serif;color:#bcbcbc;white-space:pre;line-height:20px">androidx.constraintlayout.widget.ConstraintLayout</div>
<svg style="position:absolute;left:502px;top:993px;" width="8" height="11" viewBox="0 0 8 11"><path d="M1.5 1 L5.5 5.5 L1.5 10" fill="none" stroke="#6b6e70" stroke-width="1.1"/></svg>
<div style="position:absolute;left:519.5px;top:988px;font:normal 15.65px/19px 'Liberation Sans', sans-serif;color:#bcbcbc;white-space:pre;line-height:20px">cn.authing.guard.ErrorTextView</div>
<div style="position:absolute;left:34px;top:1011px;width:1852px;height:70px;background:#3c3f41;"></div>
<div style="position:absolute;left:92.3px;top:1015px;font:normal 13.9px/17px 'Liberation Sans', sans-serif;color:#bcbcbc;white-space:pre;line-height:20px">Run</div>
<div style="position:absolute;left:160.4px;top:1015px;font:normal 13.9px/17px 'Liberation Sans', sans-serif;color:#bcbcbc;white-space:pre;line-height:20px">TODO</div>
<div style="position:absolute;left:243px;top:1015px;font:normal 13.9px/17px 'Liberation Sans', sans-serif;color:#bcbcbc;white-space:pre;line-height:20px">Problems</div>
<div style="position:absolute;left:348.5px;top:1015px;font:normal 13.9px/17px 'Liberation Sans', sans-serif;color:#bcbcbc;white-space:pre;line-height:20px">Terminal</div>
<div style="position:absolute;left:445.4px;top:1015px;font:normal 13.9px/17px 'Liberation Sans', sans-serif;color:#bcbcbc;white-space:pre;line-height:20px">Logcat</div>
<div style="position:absolute;left:534.4px;top:1015px;font:normal 13.9px/17px 'Liberation Sans', sans-serif;color:#bcbcbc;white-space:pre;line-height:20px">Build</div>
<div style="position:absolute;left:610px;top:1015px;font:normal 13.9px/17px 'Liberation Sans', sans-serif;color:#bcbcbc;white-space:pre;line-height:20px">Profiler</div>
<div style="position:absolute;left:701.5px;top:1015px;font:normal 13.9px/17px 'Liberation Sans', sans-serif;color:#bcbcbc;white-space:pre;line-height:20px">App Inspection</div>
<div style="position:absolute;left:1631.3px;top:1015px;font:normal 13.9px/17px 'Liberation Sans', sans-serif;color:#bcbcbc;white-space:pre;line-height:20px">Event Log</div>
<div style="position:absolute;left:1741px;top:1015px;font:normal 13.9px/17px 'Liberation Sans', sans-serif;color:#bcbcbc;white-space:pre;line-height:20px">Layout Inspector</div>
<svg style="position:absolute;left:73px;top:1018px;" width="14" height="15" viewBox="0 0 14 15"><path d="M1 1 L11 6.5 L1 12 Z" fill="#afb1b3"/><circle cx="11.5" cy="12" r="2" fill="#3d7fd6"/></svg>
<svg style="position:absolute;left:140px;top:1018px;" width="14" height="13" viewBox="0 0 14 13"><path d="M1 2 H3 M1 6 H3 M1 10 H3 M5 2 H13 M5 6 H13 M5 10 H13" stroke="#afb1b3" stroke-width="2"/></svg>
<svg style="position:absolute;left:223px;top:1018px;" width="14" height="14" viewBox="0 0 14 14"><circle cx="7" cy="7" r="6.5" fill="#afb1b3"/><rect x="6" y="3" width="2" height="5" fill="#3c3f41"/><rect x="6" y="9.3" width="2" height="2" fill="#3c3f41"/></svg>
<svg style="position:absolute;left:327px;top:1018px;" width="15" height="14" viewBox="0 0 15 14"><rect x="0.5" y="0.5" width="14" height="13" fill="#afb1b3"/><path d="M3 3.5 L6 6.5 L3 9.5" fill="none" stroke="#3c3f41" stroke-width="1.3"/><path d="M7 10.5 H12" stroke="#3c3f41" stroke-width="1.3"/></svg>
<svg style="position:absolute;left:425px;top:1019px;" width="15" height="13" viewBox="0 0 15 13"><path d="M1 2 H13 M1 6 H9 M1 10 H11" stroke="#afb1b3" stroke-width="2"/></svg>
<svg style="position:absolute;left:512px;top:1017px;" width="16" height="16" viewBox="0 0 16 16"><path d="M1 5 L5.5 1 L8.5 3.5 L7 5 L14.5 12.5 L12.5 14.5 L5 7 L3.5 8.5 Z" fill="#afb1b3"/></svg>
<svg style="position:absolute;left:589px;top:1019px;" width="17" height="12" viewBox="0 0 17 12"><path d="M2 11 A6.5 6.5 0 0 1 12 3" fill="none" stroke="#afb1b3" stroke-width="2"/><path d="M13.5 4 A6.5 6.5 0 0 1 15 11" fill="none" stroke="#afb1b3" stroke-width="2"/><path d="M11.5 3 L7.5 10.5 L9.5 11 Z" fill="#afb1b3"/></svg>
<svg style="position:absolute;left:682px;top:1017px;" width="15" height="16" viewBox="0 0 15 16"><rect x="3" y="1" width="9" height="4" rx="1.5" fill="#afb1b3"/><rect x="2" y="6" width="11" height="9" rx="1" fill="#afb1b3"/><path d="M0.5 8 H2 M13 8 H14.5 M0.5 12 H2 M13 12 H14.5" stroke="#afb1b3" stroke-width="1.3"/></svg>
<svg style="position:absolute;left:1609px;top:1017px;" width="17" height="16" viewBox="0 0 17 16"><path d="M8 1 C12 1 15.5 3.5 15.5 8 V15 H8 C4 15 1 12 1 8 C1 4 4 1 8 1 Z" fill="none" stroke="#afb1b3" stroke-width="1.6"/></svg>
<svg style="position:absolute;left:1719px;top:1017px;" width="17" height="16" viewBox="0 0 17 16"><rect x="1" y="1" width="11" height="9" fill="none" stroke="#afb1b3" stroke-width="1.3"/><rect x="3.5" y="3.5" width="11" height="9" fill="#3c3f41" stroke="#afb1b3" stroke-width="1.3"/><circle cx="10" cy="9" r="2.6" fill="none" stroke="#afb1b3" stroke-width="1.3"/><path d="M12 11 L15.5 14.5" stroke="#afb1b3" stroke-width="1.5"/></svg>
<svg style="position:absolute;left:41px;top:1051px;" width="17" height="18" viewBox="0 0 17 18"><path d="M1.5 4 V16.5 H13" fill="none" stroke="#afb1b3" stroke-width="1.3"/><rect x="4" y="1" width="11.5" height="12.5" fill="none" stroke="#afb1b3" stroke-width="1.3"/></svg>
<div style="position:absolute;left:72.7px;top:1049px;font:normal 13.9px/17px 'Liberation Sans', sans-serif;color:#bcbcbc;white-space:pre;line-height:20px">Launch succeeded (2 minutes ago)</div>
<div style="position:absolute;left:1354.7px;top:1049px;font:normal 13.95px/17px 'Liberation Sans', sans-serif;color:#bcbcbc;white-space:pre;line-height:20px">62:5 (499 chars, 10 line breaks)</div>
<div style="position:absolute;left:1565.8px;top:1049px;font:normal 13.9px/17px 'Liberation Sans', sans-serif;color:#bcbcbc;white-space:pre;line-height:20px">LF</div>
<div style="position:absolute;left:1595.6px;top:1049px;font:normal 13.9px/17px 'Liberation Sans', sans-serif;color:#808284;white-space:pre;line-height:20px">UTF-8</div>
<div style="position:absolute;left:1651px;top:1049px;font:normal 13.9px/17px 'Liberation Sans', sans-serif;color:#bcbcbc;white-space:pre;line-height:20px">4 spaces</div>
<svg style="position:absolute;left:1719px;top:1051px;" width="17" height="16" viewBox="0 0 17 16"><path d="M2 7 V4 A3 3 0 0 1 8 4" fill="none" stroke="#afb1b3" stroke-width="1.6"/><rect x="5" y="7" width="10.5" height="8" fill="#afb1b3"/></svg>
<svg style="position:absolute;left:1749px;top:1049px;" width="19" height="19" viewBox="0 0 19 19"><circle cx="9.5" cy="9.5" r="8.7" fill="#afb1b3"/><circle cx="6.5" cy="7" r="1.3" fill="#3c3f41"/><circle cx="12.5" cy="7" r="1.3" fill="#3c3f41"/><path d="M5.5 11 Q9.5 15 13.5 11" fill="none" stroke="#3c3f41" stroke-width="1.4"/></svg>
<svg style="position:absolute;left:1778px;top:1049px;" width="19" height="19" viewBox="0 0 19 19"><circle cx="9.5" cy="9.5" r="8.7" fill="#afb1b3"/><circle cx="6.5" cy="7" r="1.3" fill="#3c3f41"/><circle cx="12.5" cy="7" r="1.3" fill="#3c3f41"/><path d="M5.5 14 Q9.5 10.5 13.5 14" fill="none" stroke="#3c3f41" stroke-width="1.4"/></svg>
<div style="position:absolute;left:1802px;top:1049px;width:90px;height:19px;border-radius:4px;background:#2f3133"></div>
<div style="position:absolute;left:1806.5px;top:1049px;font:bold 14px/17px 'Liberation Sans', sans-serif;color:#d6d6d6;white-space:pre;line-height:20px">Darcula</div>
<div style="position:absolute;left:1865.5px;top:1049px;width:18px;height:18px;border-radius:50%;background:#3573b8"></div>
</div>
<div style="position:absolute;left:34px;top:34px;width:1852px;height:1047px;border-radius:10px;box-shadow:inset 0 0 0 1px rgba(78,79,84,0.9);pointer-events:none"></div>
</div></body></html>
